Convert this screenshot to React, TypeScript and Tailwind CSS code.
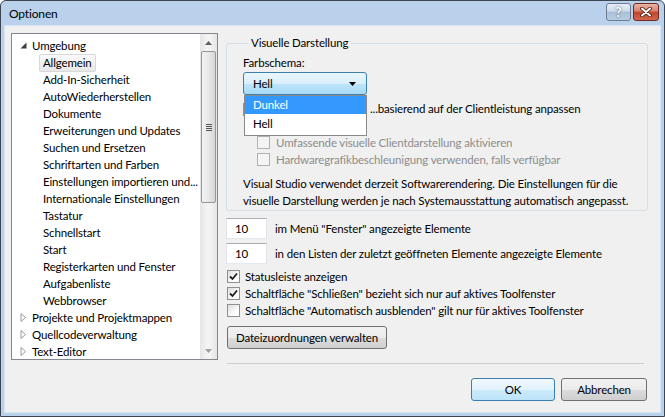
import React from 'react';

type TreeRow = { label: string; level: 0 | 1; arrow?: 'open' | 'closed'; selected?: boolean };

const treeRows: TreeRow[] = [
  { label: 'Umgebung', level: 0, arrow: 'open' },
  { label: 'Allgemein', level: 1, selected: true },
  { label: 'Add-In-Sicherheit', level: 1 },
  { label: 'AutoWiederherstellen', level: 1 },
  { label: 'Dokumente', level: 1 },
  { label: 'Erweiterungen und Updates', level: 1 },
  { label: 'Suchen und Ersetzen', level: 1 },
  { label: 'Schriftarten und Farben', level: 1 },
  { label: 'Einstellungen importieren und...', level: 1 },
  { label: 'Internationale Einstellungen', level: 1 },
  { label: 'Tastatur', level: 1 },
  { label: 'Schnellstart', level: 1 },
  { label: 'Start', level: 1 },
  { label: 'Registerkarten und Fenster', level: 1 },
  { label: 'Aufgabenliste', level: 1 },
  { label: 'Webbrowser', level: 1 },
  { label: 'Projekte und Projektmappen', level: 0, arrow: 'closed' },
  { label: 'Quellcodeverwaltung', level: 0, arrow: 'closed' },
  { label: 'Text-Editor', level: 0, arrow: 'closed' },
];

const btn =
  'h-[23px] rounded-[3px] border border-[#707070] bg-[linear-gradient(#f2f2f2_0%,#ebebeb_50%,#dddddd_50%,#cfcfcf_100%)] flex items-center justify-center';

const Checkbox: React.FC<{ checked?: boolean; disabled?: boolean }> = ({ checked, disabled }) => (
  <span
    className={
      'w-[13px] h-[13px] shrink-0 border flex items-center justify-center ' +
      (disabled ? 'border-[#b1b1b1] bg-[#f4f4f4]' : 'border-[#8e8f8f] bg-[linear-gradient(135deg,#dcdcdc,#ffffff_70%)]')
    }
  >
    {checked && (
      <svg width="9" height="9" viewBox="0 0 9 9">
        <path d="M1 4.5 L3.5 7 L8 1.5" fill="none" stroke="#1e1e1e" strokeWidth="1.8" />
      </svg>
    )}
  </span>
);

const TreeView: React.FC = () => (
  <div className="w-[207px] h-[327px] shrink-0 border border-[#828790] bg-white flex overflow-hidden">
    <div className="flex-1 pt-[3px] overflow-hidden">
      {treeRows.map((r) => (
        <div key={r.label} className="h-[17px] flex items-center whitespace-nowrap">
          {r.level === 0 ? (
            <div className="flex items-center pl-[8px]">
              <span className="w-[12px] flex items-center">
                {r.arrow === 'open' ? (
                  <svg width="7" height="7" viewBox="0 0 7 7">
                    <polygon points="6.5,0.5 6.5,6.5 0.5,6.5" fill="#3c3c3c" />
                  </svg>
                ) : (
                  <svg width="7" height="9" viewBox="0 0 7 9">
                    <polygon points="1,0.5 5.5,4.5 1,8.5" fill="none" stroke="#9a9a9a" />
                  </svg>
                )}
              </span>
              <span>{r.label}</span>
            </div>
          ) : (
            <div className="pl-[27px] h-full flex items-center">
              <span
                className={
                  'h-[18px] px-[3px] flex items-center rounded-[2px] border ' +
                  (r.selected
                    ? 'border-[#d9d9d9] bg-[linear-gradient(#fafafa,#e8e8e8)]'
                    : 'border-transparent')
                }
              >
                {r.label}
              </span>
            </div>
          )}
        </div>
      ))}
    </div>
    <div className="w-[17px] h-full bg-[linear-gradient(90deg,#e5e5e5,#f3f3f3_40%,#f3f3f3_60%,#e5e5e5)] flex flex-col items-center">
      <div className="h-[17px] flex items-center justify-center">
        <svg width="7" height="4" viewBox="0 0 7 4">
          <polygon points="3.5,0 7,4 0,4" fill="#606060" />
        </svg>
      </div>
      <div className="w-[15px] h-[152px] rounded-[2px] border border-[#979797] bg-[linear-gradient(90deg,#f2f2f2,#e8e8e8_50%,#d6d6d6)] flex flex-col items-center justify-center gap-[1px]">
        <span className="w-[6px] h-px bg-[#555]" />
        <span className="w-[6px] h-px bg-[#555]" />
        <span className="w-[6px] h-px bg-[#555]" />
        <span className="w-[6px] h-px bg-[#555]" />
      </div>
      <div className="flex-1" />
      <div className="h-[17px] flex items-center justify-center">
        <svg width="7" height="4" viewBox="0 0 7 4">
          <polygon points="0,0 7,0 3.5,4" fill="#a0a0a0" />
        </svg>
      </div>
    </div>
  </div>
);

const NumberRow: React.FC<{ value: string; label: string; className?: string }> = ({ value, label, className }) => (
  <div className={'flex items-center ' + (className ?? '')}>
    <div className="w-[41px] h-[21px] bg-white border border-t-[#abadb3] border-x-[#e2e3ea] border-b-[#e3e9ef] flex items-center pl-[8px]">
      {value}
    </div>
    <span className="ml-[8px]">{label}</span>
  </div>
);

export default function App() {
  return (
    <div className="w-[665px] h-[417px] bg-white font-['Lato',sans-serif] text-[11.5px] tracking-[-0.15px] leading-[16px] text-black">
      <div className="w-full h-full flex flex-col rounded-t-[6px] border border-[#3d4551] bg-[#b9d1ea]">
        {/* title bar */}
        <div className="h-[24px] shrink-0 flex items-center pl-[8px] pr-[5px]">
          <span className="flex-1 pt-[1px] text-[12px]">Optionen</span>
          <div className="flex gap-[2px] self-start mt-[2px]">
            <div className="w-[25px] h-[18px] rounded-[3px] border border-[#6d7c8f] bg-[linear-gradient(#e6eef7_0%,#ccdbeb_45%,#a9c0d9_50%,#b8cde3_100%)] flex items-center justify-center text-white font-bold text-[13px] [text-shadow:0_0_2px_#29394d]">
              ?
            </div>
            <div className="w-[26px] h-[18px] rounded-[3px] border border-[#6f2a22] bg-[linear-gradient(#eab3a5_0%,#d9816f_45%,#c4432d_50%,#d2674f_100%)] flex items-center justify-center">
              <svg width="12" height="10" viewBox="0 0 12 10">
                <path d="M2 1.5 L10 8.5 M10 1.5 L2 8.5" stroke="#3a1410" strokeWidth="3.6" strokeLinecap="round" />
                <path d="M2 1.5 L10 8.5 M10 1.5 L2 8.5" stroke="#ffffff" strokeWidth="2" strokeLinecap="round" />
              </svg>
            </div>
          </div>
        </div>

        {/* client area */}
        <div className="flex-1 mx-[3px] mb-[3px] border border-[#d6e4f3] bg-[#f0f0f0] flex pt-[7px] pl-[6px]">
          <TreeView />

          <div className="w-[422px] ml-[8px] flex flex-col">
            <fieldset className="mt-[2px] border border-[#d5dfe5] rounded-[3px] pl-[16px] pr-[4px] pb-[1px]">
              <legend className="ml-[5px] px-[3px] leading-[16px]">Visuelle Darstellung</legend>
              <div className="mt-[4px] leading-[16px]">Farbschema:</div>
              <div className="relative w-[124px] mt-[1px]">
                <div className="h-[23px] rounded-[3px] border border-[#3c7fb1] bg-[linear-gradient(#eaf6fd_0%,#d9f0fc_50%,#bee6fd_50%,#a7d9f5_100%)] flex items-center pl-[9px] pr-[10px]">
                  <span className="flex-1">Hell</span>
                  <svg width="7" height="4" viewBox="0 0 7 4">
                    <polygon points="0,0 7,0 3.5,4" fill="#000" />
                  </svg>
                </div>
                <div className="absolute left-[1px] top-[23px] w-[123px] border border-[#8a8a8a] bg-white z-10 pb-[2px]">
                  <div className="h-[18px] bg-[#3399ff] text-white flex items-center pl-[8px]">Dunkel</div>
                  <div className="h-[19px] flex items-center pl-[8px]">Hell</div>
                </div>
              </div>
              <div className="mt-[6px] h-[16px] flex items-center">
                <Checkbox />
                {/* label start is covered by the open dropdown list */}
                <span className="ml-[5px] w-[109px] shrink-0" />
                <span className="whitespace-nowrap">...basierend auf der Clientleistung anpassen</span>
              </div>
              <div className="mt-[17px] h-[17px] flex items-center pl-[14px] text-[#8d8d8d]">
                <Checkbox disabled />
                <span className="ml-[6px]">Umfassende visuelle Clientdarstellung aktivieren</span>
              </div>
              <div className="h-[17px] flex items-center pl-[14px] text-[#8d8d8d]">
                <Checkbox disabled />
                <span className="ml-[6px]">Hardwaregrafikbeschleunigung verwenden, falls verfügbar</span>
              </div>
              <p className="mt-[7px] leading-[17px] whitespace-nowrap">
                Visual Studio verwendet derzeit Softwarerendering. Die Einstellungen für die
                <br />
                visuelle Darstellung werden je nach Systemausstattung automatisch angepasst.
              </p>
            </fieldset>

            <NumberRow className="mt-[7px]" value="10" label={'im Menü "Fenster" angezeigte Elemente'} />
            <NumberRow className="mt-[4px]" value="10" label="in den Listen der zuletzt geöffneten Elemente angezeigte Elemente" />

            <div className="mt-[4px] flex flex-col">
              <label className="h-[17px] flex items-center pl-[1px]">
                <Checkbox checked />
                <span className="ml-[5px]">Statusleiste anzeigen</span>
              </label>
              <label className="h-[17px] flex items-center pl-[1px]">
                <Checkbox checked />
                <span className="ml-[5px]">Schaltfläche "Schließen" bezieht sich nur auf aktives Toolfenster</span>
              </label>
              <label className="h-[17px] flex items-center pl-[1px]">
                <Checkbox />
                <span className="ml-[5px]">Schaltfläche "Automatisch ausblenden" gilt nur für aktives Toolfenster</span>
              </label>
            </div>

            <button className={btn + ' mt-[7px] w-[160px] h-[22px] ml-[1px]'}>Dateizuordnungen verwalten</button>

            <div className="mt-[14px] ml-[1px] mr-[4px] h-px bg-[#d0d0d0]" />

            <div className="mt-[14px] flex justify-end gap-[6px] mr-[1px]">
              <button className="w-[84px] h-[23px] rounded-[3px] border border-[#3c7fb1] bg-[linear-gradient(#f0f9fe_0%,#e2f3fd_50%,#cdebfc_50%,#bde3f8_100%)] flex items-center justify-center">
                OK
              </button>
              <button className={btn + ' w-[86px]'}>Abbrechen</button>
            </div>
          </div>
        </div>
      </div>
    </div>
  );
}
